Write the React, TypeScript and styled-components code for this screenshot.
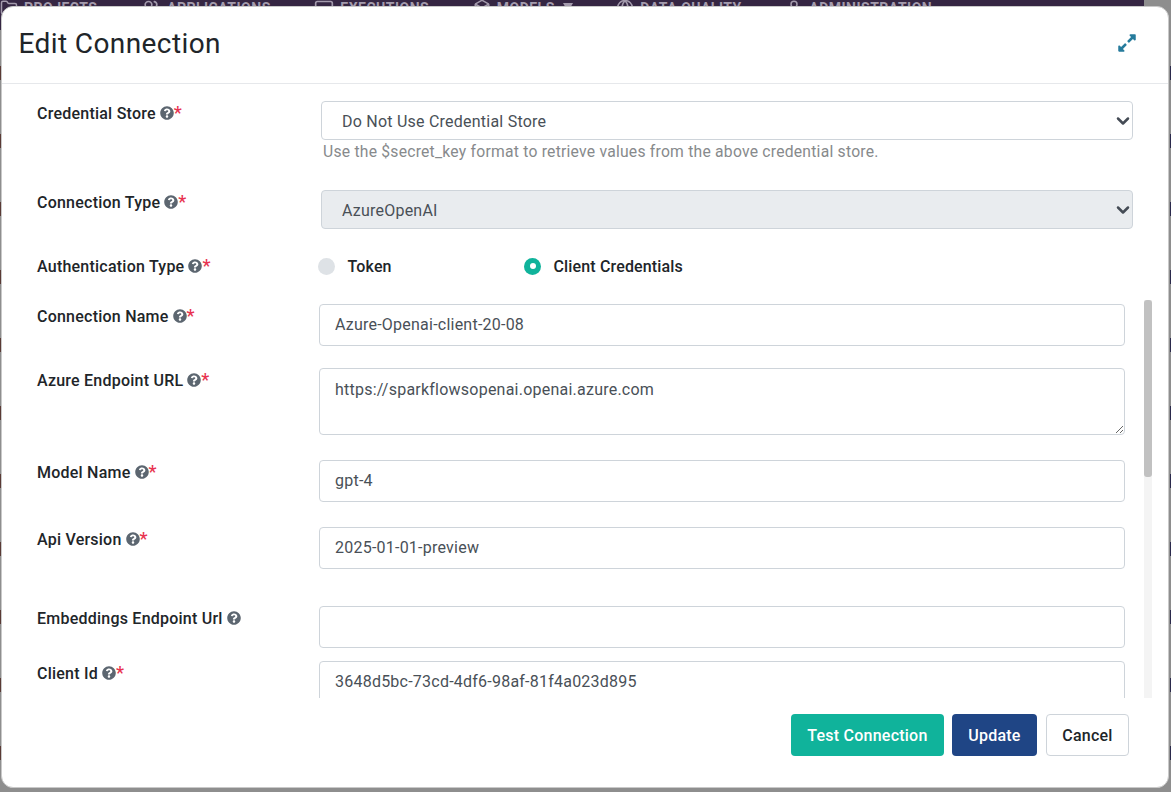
import { FC, ReactNode } from 'react';
import { ChevronDown, Box, Folder, Globe, Monitor, User, Users } from 'lucide-react';
import { FaExpandAlt, FaQuestionCircle } from 'react-icons/fa';
import styled, { createGlobalStyle } from 'styled-components';

const GlobalStyle = createGlobalStyle`
  html, body {
    margin: 0;
    padding: 0;
    height: 100%;
    overflow: hidden;
    font-family: Roboto, "Liberation Sans", sans-serif;
  }
  * {
    box-sizing: border-box;
  }
`;

const Page = styled.div`
  position: relative;
  width: 1171px;
  height: 792px;
  overflow: hidden;
  background-color: #8e8e8e;
  background-image:
    repeating-linear-gradient(#8e8e8e 0 54px, #2b2a4c 54px 68px),
    repeating-linear-gradient(#8e8e8e 0 54px, #5a3a35 54px 68px);
  background-size: 1px 100%, 1px 100%;
  background-position: right 0 top 12px, left 0 top 12px;
  background-repeat: no-repeat;
`;

const TopNav = styled.nav`
  display: flex;
  gap: 43.5px;
  height: 30px;
  background: #352643;
  color: #a49bad;
  margin-right: 27px;
`;

const NavItem = styled.div`
  display: flex;
  align-items: flex-start;
  gap: 6px;
  font-size: 14px;
  font-weight: 700;
  line-height: 16px;
  letter-spacing: 0.5px;
  text-transform: uppercase;
  white-space: nowrap;
  svg {
    margin-top: -1px;
    flex: none;
  }
`;

const NavCaret = styled.span`
  width: 0;
  height: 0;
  margin: 3px 0 0 2px;
  border-top: 9px solid currentColor;
  border-left: 5px solid transparent;
  border-right: 5px solid transparent;
`;

const Modal = styled.div`
  position: absolute;
  top: 6px;
  left: 1px;
  width: 1168px;
  height: 782px;
  display: flex;
  flex-direction: column;
  background: #fff;
  border: 1px solid #c9c9c9;
  border-radius: 12px;
  overflow: hidden;
`;

const ModalHeader = styled.header`
  flex: none;
  display: flex;
  align-items: center;
  justify-content: space-between;
  height: 77px;
  padding: 0 31px 3px 16.5px;
  border-bottom: 1px solid #e6e8eb;
`;

const Title = styled.h1`
  margin: 0;
  font-size: 28px;
  font-weight: 400;
  line-height: 34px;
  letter-spacing: 0.4px;
  color: #212529;
`;

const ExpandButton = styled.button`
  display: flex;
  margin-top: -2px;
  padding: 0;
  border: 0;
  background: none;
  color: #267b9c;
`;

const FixedFields = styled.section`
  flex: none;
  padding: 17px 35px 0 35px;
`;

const Row = styled.div<{ $top?: number; $column?: number }>`
  display: grid;
  grid-template-columns: ${(p) => p.$column ?? 284}px 1fr;
  margin-top: ${(p) => p.$top ?? 0}px;
`;

const LabelText = styled.label`
  display: flex;
  align-items: center;
  gap: 4px;
  height: 24px;
  font-size: 16px;
  font-weight: 500;
  letter-spacing: 0.23px;
  color: #212529;
  white-space: nowrap;
  svg {
    color: #5c6670;
    flex: none;
  }
`;

const Star = styled.span`
  margin-left: -4px;
  color: #e8334f;
  font-size: 18px;
  line-height: 20px;
`;

const SelectWrap = styled.div`
  position: relative;
  display: flex;
  svg {
    position: absolute;
    top: 10px;
    right: 0;
    color: #444b55;
    pointer-events: none;
  }
`;

const Select = styled.select`
  appearance: none;
  width: 100%;
  height: 39px;
  padding: 2px 20px 0;
  border: 1px solid #ced4da;
  border-radius: 4px;
  background: ${(p) => (p.disabled ? '#e9ecef' : '#fff')};
  color: #495057;
  font-family: inherit;
  font-size: 16px;
  letter-spacing: 0.23px;
  opacity: 1;
`;

const Hint = styled.p`
  margin: 2px 0 0 2px;
  font-size: 15.7px;
  line-height: 20px;
  letter-spacing: 0.23px;
  color: #878a8c;
`;

const RadioGroup = styled.div`
  display: flex;
`;

const RadioOption = styled.label`
  display: flex;
  align-items: center;
  gap: 12.5px;
  width: 206px;
  height: 24px;
  font-size: 16px;
  font-weight: 500;
  letter-spacing: 0.15px;
  color: #212529;
`;

const RadioDot = styled.span<{ $checked?: boolean }>`
  display: flex;
  align-items: center;
  justify-content: center;
  width: 17px;
  height: 17px;
  border-radius: 50%;
  background: ${(p) => (p.$checked ? '#10b39b' : '#dee2e6')};
  &::after {
    content: '';
    display: ${(p) => (p.$checked ? 'block' : 'none')};
    width: 6px;
    height: 6px;
    border-radius: 50%;
    background: #fff;
  }
`;

const ScrollFrame = styled.div`
  position: relative;
  flex: none;
  height: 398px;
  margin-top: 22px;
  margin-right: 16px;
  overflow: hidden;
`;

const ScrollContent = styled.div`
  padding: 4px 27px 0 35px;
`;

const ScrollTrack = styled.div`
  position: absolute;
  top: 0;
  right: 0;
  bottom: 0;
  width: 8px;
  background: #f4f4f4;
`;

const ScrollThumb = styled.div`
  height: 177px;
  border-radius: 3px;
  background: #c1c1c1;
`;

const TextInput = styled.input`
  width: 100%;
  height: 42px;
  padding: 0 15px 2px;
  border: 1px solid #ced4da;
  border-radius: 4px;
  color: #495057;
  font-family: inherit;
  font-size: 16px;
  letter-spacing: 0.23px;
`;

const TextArea = styled.textarea`
  display: block;
  width: 100%;
  height: 67px;
  padding: 9px 15px;
  border: 1px solid #ced4da;
  border-radius: 4px;
  color: #495057;
  font-family: inherit;
  font-size: 16px;
  line-height: 24px;
  letter-spacing: 0.23px;
`;

const ModalFooter = styled.footer`
  flex: none;
  display: flex;
  justify-content: flex-end;
  padding: 16px 39px 0 0;
`;

const ActionButton = styled.button<{ $kind: 'test' | 'update' | 'cancel' }>`
  height: 42px;
  padding: 0 15.35px;
  margin-left: ${(p) => (p.$kind === 'cancel' ? 9 : p.$kind === 'update' ? 8 : 0)}px;
  border: 1px solid ${(p) => (p.$kind === 'cancel' ? '#ced4da' : 'transparent')};
  border-radius: 4px;
  background: ${(p) =>
    p.$kind === 'test' ? '#10b39b' : p.$kind === 'update' ? '#1f4585' : '#fff'};
  color: ${(p) => (p.$kind === 'cancel' ? '#212529' : '#fff')};
  font-family: inherit;
  font-size: 16px;
  font-weight: 500;
  letter-spacing: 0.23px;
`;

const FieldLabel: FC<{ required?: boolean; children: ReactNode }> = ({ required, children }) => (
  <LabelText>
    {children}
    <FaQuestionCircle size={14} />
    {required && <Star>*</Star>}
  </LabelText>
);

const navItems = [
  { name: 'Projects', icon: <Folder size={18} /> },
  { name: 'Applications', icon: <Users size={20} /> },
  { name: 'Executions', icon: <Monitor size={20} /> },
  { name: 'Models', icon: <Box size={18} />, caret: true },
  { name: 'Data Quality', icon: <Globe size={18} /> },
  { name: 'Administration', icon: <User size={18} /> }
];

const fields = [
  { label: 'Connection Name', value: 'Azure-Openai-client-20-08', required: true, top: 0 },
  { label: 'Azure Endpoint URL', value: 'https://sparkflowsopenai.openai.azure.com', required: true, top: 22, multiline: true },
  { label: 'Model Name', value: 'gpt-4', required: true, top: 25 },
  { label: 'Api Version', value: '2025-01-01-preview', required: true, top: 25 },
  { label: 'Embeddings Endpoint Url', value: '', required: false, top: 37 },
  { label: 'Client Id', value: '3648d5bc-73cd-4df6-98af-81f4a023d895', required: true, top: 13 }
];

export default function App() {
  return (
    <Page>
      <GlobalStyle />
      <TopNav>
        {navItems.map((item) => (
          <NavItem key={item.name}>
            {item.icon}
            {item.name}
            {item.caret && <NavCaret />}
          </NavItem>
        ))}
      </TopNav>
      <Modal>
        <ModalHeader>
          <Title>Edit Connection</Title>
          <ExpandButton type="button" aria-label="Expand">
            <FaExpandAlt size={20} />
          </ExpandButton>
        </ModalHeader>
        <FixedFields>
          <Row>
            <FieldLabel required>Credential Store</FieldLabel>
            <div>
              <SelectWrap>
                <Select defaultValue="none">
                  <option value="none">Do Not Use Credential Store</option>
                </Select>
                <ChevronDown size={20} strokeWidth={3} />
              </SelectWrap>
              <Hint>Use the $secret_key format to retrieve values from the above credential store.</Hint>
            </div>
          </Row>
          <Row $top={28}>
            <FieldLabel required>Connection Type</FieldLabel>
            <SelectWrap>
              <Select disabled defaultValue="azure">
                <option value="azure">AzureOpenAI</option>
              </Select>
              <ChevronDown size={20} strokeWidth={3} />
            </SelectWrap>
          </Row>
          <Row $top={25} $column={281}>
            <FieldLabel required>Authentication Type</FieldLabel>
            <RadioGroup>
              <RadioOption>
                <RadioDot />
                Token
              </RadioOption>
              <RadioOption>
                <RadioDot $checked />
                Client Credentials
              </RadioOption>
            </RadioGroup>
          </Row>
        </FixedFields>
        <ScrollFrame>
          <ScrollContent>
            {fields.map((field) => (
              <Row key={field.label} $top={field.top} $column={282}>
                <FieldLabel required={field.required}>{field.label}</FieldLabel>
                {field.multiline ? (
                  <TextArea defaultValue={field.value} />
                ) : (
                  <TextInput defaultValue={field.value} />
                )}
              </Row>
            ))}
          </ScrollContent>
          <ScrollTrack>
            <ScrollThumb />
          </ScrollTrack>
        </ScrollFrame>
        <ModalFooter>
          <ActionButton type="button" $kind="test">Test Connection</ActionButton>
          <ActionButton type="button" $kind="update">Update</ActionButton>
          <ActionButton type="button" $kind="cancel">Cancel</ActionButton>
        </ModalFooter>
      </Modal>
    </Page>
  );
}
